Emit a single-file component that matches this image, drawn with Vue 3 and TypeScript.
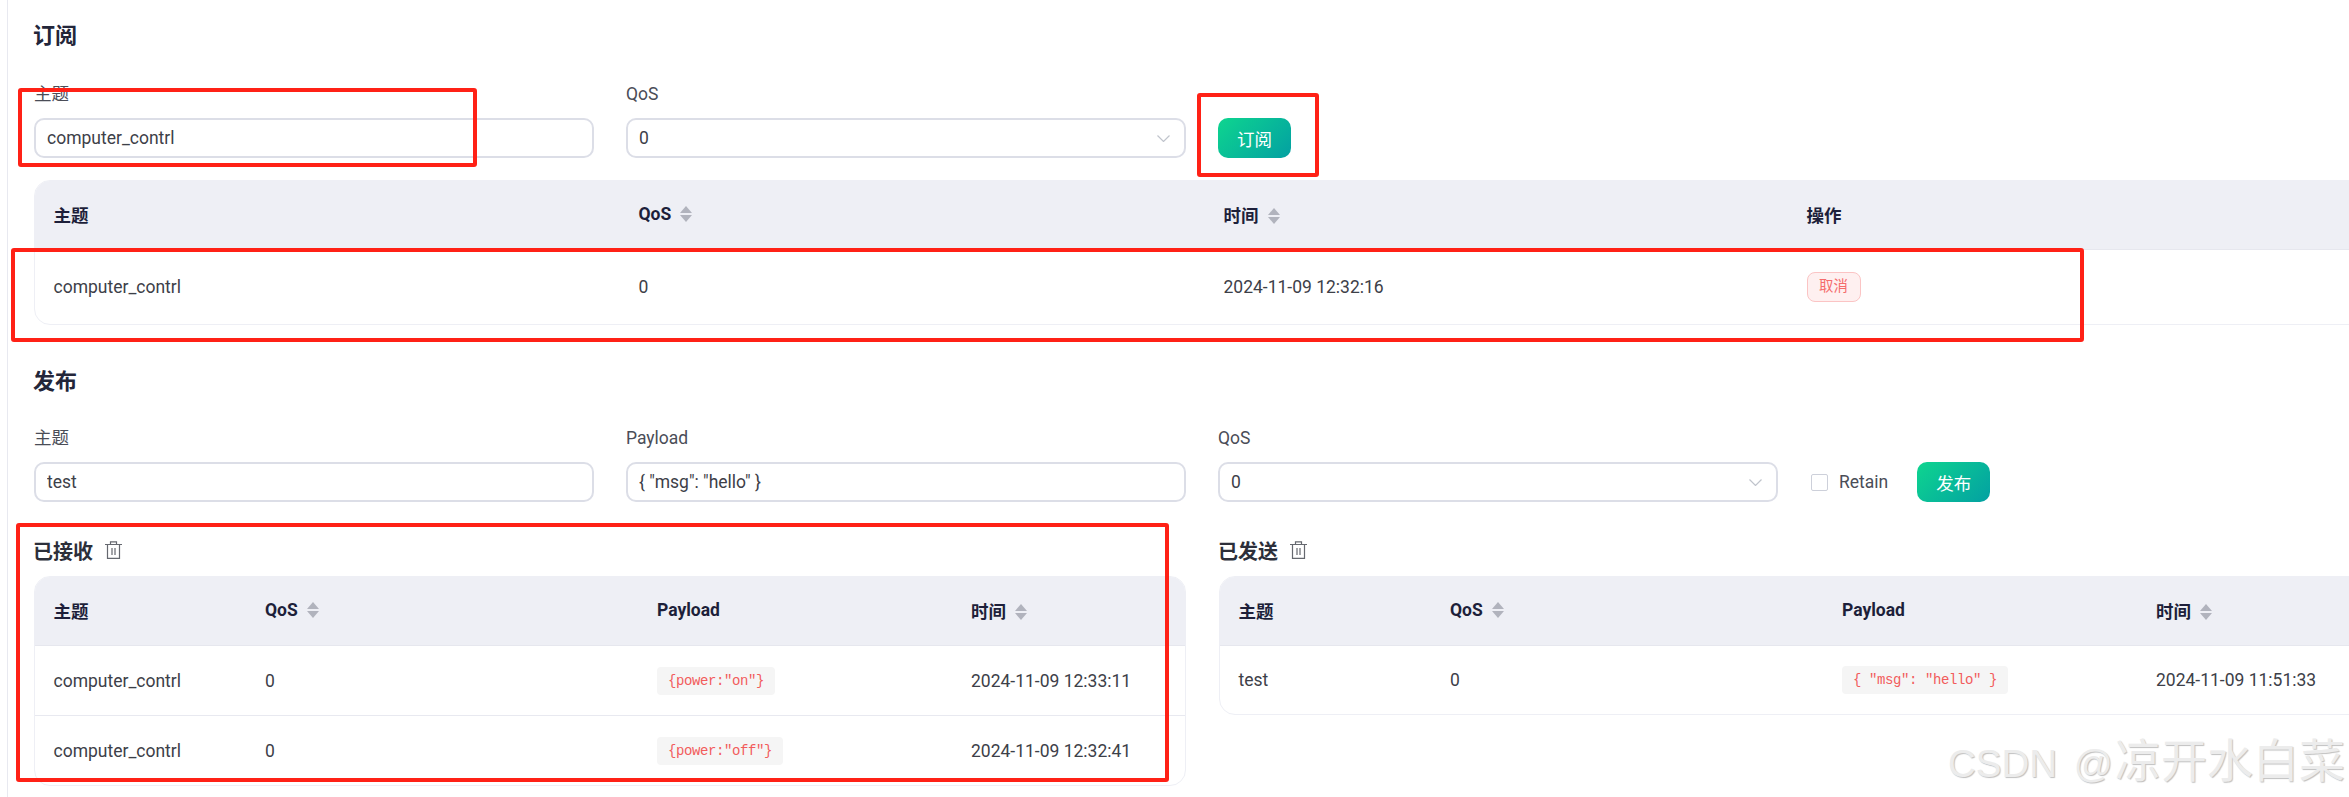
<template>
  <div class="shell">
    <div class="page">
      <h2 class="title">订阅</h2>
      <div class="form-row">
        <div class="field">
          <label>主题</label>
          <input class="control" type="text" value="computer_contrl" />
        </div>
        <div class="field">
          <label>QoS</label>
          <div class="control select">
            <span>0</span>
            <svg class="chevron" width="13" height="7" viewBox="0 0 13 7"><path d="M0.5 0.5L6.5 6.5L12.5 0.5" /></svg>
          </div>
        </div>
        <div class="actions">
          <button class="btn">订阅</button>
        </div>
      </div>

      <div class="card sub-card">
        <table>
          <colgroup>
            <col v-for="c in subColumns" :key="c.key" :style="{ width: c.width + 'px' }" />
          </colgroup>
          <thead>
            <tr>
              <th v-for="c in subColumns" :key="c.key">
                {{ c.label }}<span v-if="c.sort" class="sort"></span>
              </th>
            </tr>
          </thead>
          <tbody>
            <tr>
              <td>computer_contrl</td>
              <td>0</td>
              <td>2024-11-09 12:32:16</td>
              <td><span class="cancel">取消</span></td>
            </tr>
          </tbody>
        </table>
      </div>

      <h2 class="title pub-title">发布</h2>
      <div class="form-row">
        <div class="field">
          <label>主题</label>
          <input class="control" type="text" value="test" />
        </div>
        <div class="field">
          <label>Payload</label>
          <input class="control" type="text" value='{ "msg": "hello" }' />
        </div>
        <div class="field">
          <label>QoS</label>
          <div class="control select">
            <span>0</span>
            <svg class="chevron" width="13" height="7" viewBox="0 0 13 7"><path d="M0.5 0.5L6.5 6.5L12.5 0.5" /></svg>
          </div>
        </div>
        <div class="actions">
          <span class="check"></span>
          <span class="retain">Retain</span>
          <button class="btn">发布</button>
        </div>
      </div>

      <div class="lists">
        <div v-for="list in lists" :key="list.title" :class="list.cls">
          <div class="list-head">
            <span>{{ list.title }}</span>
            <svg class="trash" width="17" height="18" viewBox="0 0 17 18">
              <path d="M0 3.5H17M5.5 3.5V0.8H11.5V3.5M2.5 3.5V17.3H14.5V3.5M7 7V14M10 7V14" />
            </svg>
          </div>
          <div class="card">
            <table>
              <colgroup>
                <col v-for="c in msgColumns" :key="c.key" :style="{ width: c.width + 'px' }" />
              </colgroup>
              <thead>
                <tr>
                  <th v-for="c in msgColumns" :key="c.key">
                    {{ c.label }}<span v-if="c.sort" class="sort"></span>
                  </th>
                </tr>
              </thead>
              <tbody>
                <tr v-for="(row, index) in list.rows" :key="index">
                  <td>{{ row.topic }}</td>
                  <td>{{ row.qos }}</td>
                  <td><code>{{ row.payload }}</code></td>
                  <td>{{ row.time }}</td>
                </tr>
              </tbody>
            </table>
          </div>
        </div>
      </div>
    </div>

    <div v-for="(b, i) in marks" :key="i" class="mark" :style="{ left: b.x + 'px', top: b.y + 'px', width: b.w + 'px', height: b.h + 'px' }"></div>
    <div class="watermark"><span class="wm-latin">CSDN @</span><span class="wm-cjk">凉开水白菜</span></div>
  </div>
</template>

<script setup lang="ts">
interface IColumn {
  key: string
  label: string
  width: number
  sort: boolean
}

interface IRow {
  topic: string
  qos: string
  payload: string
  time: string
}

const subColumns: IColumn[] = [
  { key: 'topic', label: '主题', width: 585, sort: false },
  { key: 'qos', label: 'QoS', width: 585, sort: true },
  { key: 'time', label: '时间', width: 583, sort: true },
  { key: 'op', label: '操作', width: 581, sort: false }
]

const msgColumns: IColumn[] = [
  { key: 'topic', label: '主题', width: 211.5, sort: false },
  { key: 'qos', label: 'QoS', width: 392, sort: true },
  { key: 'payload', label: 'Payload', width: 314, sort: false },
  { key: 'time', label: '时间', width: 232.5, sort: true }
]

const lists: { title: string; cls: string; rows: IRow[] }[] = [
  {
    title: '已接收',
    cls: 'received',
    rows: [
      { topic: 'computer_contrl', qos: '0', payload: '{power:"on"}', time: '2024-11-09 12:33:11' },
      { topic: 'computer_contrl', qos: '0', payload: '{power:"off"}', time: '2024-11-09 12:32:41' }
    ]
  },
  {
    title: '已发送',
    cls: 'sent',
    rows: [{ topic: 'test', qos: '0', payload: '{ "msg": "hello" }', time: '2024-11-09 11:51:33' }]
  }
]

// red boxes drawn over the screenshot
const marks = [
  { x: 18, y: 88, w: 459, h: 79 },
  { x: 1197, y: 93, w: 122, h: 84 },
  { x: 11, y: 248, w: 2073, h: 94 },
  { x: 16, y: 523, w: 1153, h: 259 }
]
</script>

<style scoped>
.shell {
  position: relative;
  width: 2349px;
  height: 797px;
  overflow: hidden;
  background: #fff;
  font-family: Roboto, "Noto Sans CJK SC", sans-serif;
  font-size: 17.5px;
  color: #3d4048;
}

.page {
  box-sizing: border-box;
  width: 2342px;
  height: 797px;
  margin-left: 7px;
  padding: 21px 0 0 26px;
  border-left: 1px solid #e8e9f0;
}

.title {
  margin: 0 0 31px -1px;
  height: 30px;
  line-height: 30px;
  font-size: 22px;
  font-weight: 700;
  color: #23263a;
}

.pub-title {
  margin: 42px 0 29px -1px;
}

.form-row {
  display: grid;
  grid-template-columns: 560px 560px 560px auto;
  column-gap: 32px;
  justify-content: start;
}

.field label {
  display: block;
  height: 24px;
  line-height: 24px;
  margin-bottom: 12px;
  color: #4a4d57;
}

.control {
  display: block;
  box-sizing: border-box;
  width: 100%;
  height: 40px;
  padding: 0 11px;
  border: 2px solid #dcdee7;
  border-radius: 10px;
  outline: none;
  background: #fff;
  font: inherit;
  color: #3d4048;
}

.select {
  display: flex;
  align-items: center;
  justify-content: space-between;
  padding-right: 14px;
}

.chevron {
  fill: none;
  stroke: #c0c4cc;
  stroke-width: 1.2;
}

.actions {
  display: flex;
  align-items: center;
  align-self: end;
  height: 40px;
}

.btn {
  box-sizing: border-box;
  height: 40px;
  padding: 0 19px;
  border: none;
  border-radius: 10px;
  background: linear-gradient(135deg, #0ed58f, #03a0a2);
  font: inherit;
  color: #fff;
}

.check {
  box-sizing: border-box;
  width: 17px;
  height: 17px;
  margin-left: 1px;
  border: 1px solid #cdd0da;
  border-radius: 2px;
}

.retain {
  margin: 0 29px 0 11px;
  color: #4a4d57;
}

.card {
  box-sizing: border-box;
  width: 1152px;
  border: 1px solid #eeeff5;
  border-radius: 16px;
  overflow: hidden;
}

.sub-card {
  width: 2336px;
  margin-top: 22px;
}

table {
  width: 100%;
  table-layout: fixed;
  border-collapse: separate;
  border-spacing: 0;
}

th,
td {
  box-sizing: border-box;
  padding: 0 18.5px;
  text-align: left;
  white-space: nowrap;
}

th {
  height: 69px;
  padding-bottom: 2px;
  background: #eeeff5;
  border-bottom: 1px solid #e6e7ee;
  font-weight: 700;
  color: #1d1f3a;
}

td {
  height: 70px;
  border-bottom: 1px solid #e8e9f0;
}

tbody tr:last-child td {
  height: 69px;
  border-bottom: none;
}

.sub-card tbody tr:last-child td {
  height: 74px;
}

.sent tbody tr:last-child td {
  height: 68px;
}

.sort {
  display: inline-block;
  position: relative;
  width: 12px;
  height: 16px;
  margin-left: 9px;
  vertical-align: -2px;
}

.sort::before,
.sort::after {
  content: "";
  position: absolute;
  left: 0;
  border-left: 6px solid transparent;
  border-right: 6px solid transparent;
}

.sort::before {
  top: 0;
  border-bottom: 7px solid #b1b3bd;
}

.sort::after {
  bottom: 0;
  border-top: 7px solid #b1b3bd;
}

.cancel {
  display: inline-block;
  box-sizing: border-box;
  width: 54px;
  height: 30px;
  line-height: 28px;
  text-align: center;
  border: 1px solid #fbc4c4;
  border-radius: 8px;
  background: #fef0f0;
  font-size: 14.4px;
  color: #f56c6c;
}

code {
  display: inline-block;
  height: 28px;
  line-height: 28px;
  padding: 0 11px;
  border-radius: 4px;
  background: #f5f5f5;
  font-family: "Liberation Mono", monospace;
  font-size: 14px;
  letter-spacing: -0.4px;
  color: #f25c5c;
}

.lists {
  display: grid;
  grid-template-columns: 1152px 1152px;
  column-gap: 33px;
  align-items: start;
  margin-top: 33px;
}

.list-head {
  display: flex;
  align-items: center;
  gap: 12px;
  height: 30px;
  margin: 0 0 11px -1px;
  font-size: 20px;
  font-weight: 700;
  color: #2c2f3a;
}

.trash {
  fill: none;
  stroke: #65686f;
  stroke-width: 1.2;
}

.mark {
  position: absolute;
  box-sizing: border-box;
  border: 4px solid #ff2116;
  border-radius: 3px;
}

.watermark {
  position: absolute;
  left: 1948px;
  top: 728px;
  height: 58px;
  line-height: 58px;
  white-space: nowrap;
  color: #ececec;
  text-shadow: 1px 1px 1px #c0c0c0;
}

.wm-latin {
  font-family: "Liberation Sans", sans-serif;
  font-size: 38.5px;
  word-spacing: 6px;
}

.wm-cjk {
  margin-left: 2px;
  font-family: "Noto Sans CJK SC", sans-serif;
  font-size: 46px;
}
</style>

<style>
html,
body {
  margin: 0;
  overflow: hidden;
  background: #fff;
}
</style>
